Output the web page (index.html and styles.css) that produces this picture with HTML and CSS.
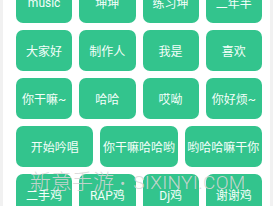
FILE: index.html
```html
<!DOCTYPE html>
<html>
<head>
<meta charset="utf-8">
<link rel="stylesheet" href="styles.css">
</head>
<body>
<div class="page">
  <div class="list">
    <div class="row">
      <div class="btn">music</div>
      <div class="btn">坤坤</div>
      <div class="btn">练习坤</div>
      <div class="btn">二年半</div>
    </div>
    <div class="row">
      <div class="btn">大家好</div>
      <div class="btn">制作人</div>
      <div class="btn">我是</div>
      <div class="btn">喜欢</div>
    </div>
    <div class="row">
      <div class="btn">你干嘛~</div>
      <div class="btn">哈哈</div>
      <div class="btn">哎呦</div>
      <div class="btn">你好烦~</div>
    </div>
    <div class="row">
      <div class="btn">开始吟唱</div>
      <div class="btn">你干嘛哈哈哟</div>
      <div class="btn">哟哈哈嘛干你</div>
    </div>
    <div class="row">
      <div class="btn">二手鸡</div>
      <div class="btn">RAP鸡</div>
      <div class="btn">Dj鸡</div>
      <div class="btn">谢谢鸡</div>
    </div>
  </div>
  <div class="watermark"><span class="wm-cn">新意手游</span><span class="wm-dot">•</span><span class="wm-en">SIXINYI.COM</span></div>
</div>
</body>
</html>
```
FILE: styles.css
```css
html, body {
  margin: 0;
  padding: 0;
  background: #f1f1f1;
  overflow: hidden;
}
.page {
  position: relative;
  margin: 0 3px;
  height: 206px;
  background: #ffffff;
  overflow: hidden;
}
.list {
  display: flex;
  flex-direction: column;
  gap: 7px;
  margin-top: -18px;
  padding: 0 8px 0 13px;
}
.row {
  display: flex;
  gap: 7px;
}
.btn {
  flex: 1;
  height: 41px;
  border-radius: 7px;
  background: #33c48d;
  color: #f4fffa;
  font-family: Roboto, "Noto Sans CJK SC", sans-serif;
  font-size: 12px;
  display: flex;
  align-items: center;
  justify-content: center;
  white-space: nowrap;
}
.watermark {
  position: absolute;
  left: 27px;
  top: 165px;
  color: rgba(214, 214, 214, 0.9);
  font-family: Roboto, "Noto Sans CJK SC", sans-serif;
  font-weight: 300;
  white-space: nowrap;
  display: flex;
  align-items: baseline;
}
.wm-cn {
  font-size: 21px;
}
.wm-dot {
  font-size: 16px;
  margin: 0 8px 0 6px;
}
.wm-en {
  font-size: 19px;
  letter-spacing: 0.3px;
}
```
